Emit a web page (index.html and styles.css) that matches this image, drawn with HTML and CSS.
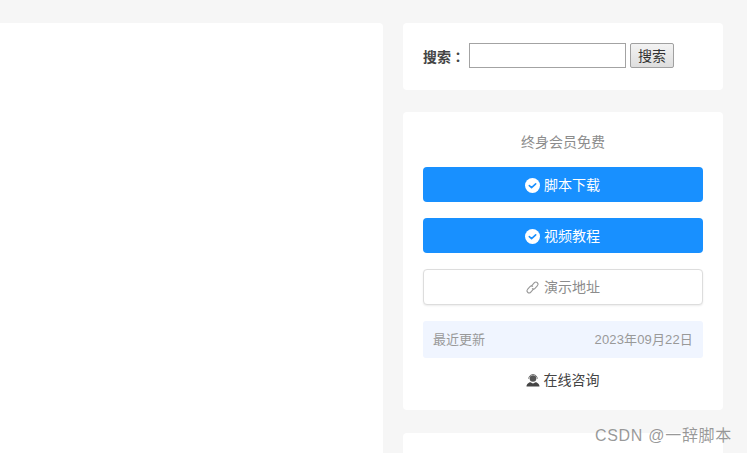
FILE: index.html
```html
<!DOCTYPE html>
<html lang="zh-CN">
<head>
<meta charset="utf-8">
<title>脚本下载</title>
<link rel="stylesheet" href="styles.css">
</head>
<body>
<div class="layout">
  <main class="content"></main>
  <aside class="sidebar">
    <section class="card search-card">
      <form class="search-form">
        <label class="search-label" lang="zh-Hant" for="q">搜索：</label>
        <input class="search-input" id="q" type="text">
        <button class="search-button" type="button">搜索</button>
      </form>
    </section>
    <section class="card info-card">
      <p class="free-note">终身会员免费</p>
      <a class="action primary">
        <svg class="icon" viewBox="0 0 16 16"><circle cx="8" cy="8" r="8" fill="#fff"/><path d="M4.600 8.100l2.400 2.200 4.400-4" fill="none" stroke="#1890ff" stroke-width="1.700" stroke-linecap="round" stroke-linejoin="round"/></svg>
        <span class="label">脚本下载</span>
      </a>
      <a class="action primary">
        <svg class="icon" viewBox="0 0 16 16"><circle cx="8" cy="8" r="8" fill="#fff"/><path d="M4.600 8.100l2.400 2.200 4.400-4" fill="none" stroke="#1890ff" stroke-width="1.700" stroke-linecap="round" stroke-linejoin="round"/></svg>
        <span class="label">视频教程</span>
      </a>
      <a class="action outline">
        <svg class="icon" viewBox="0 0 16 16" fill="none" stroke="#999" stroke-width="1.200"><path d="M6.800 6.500l3.200-3.600a2.300 2.300 0 0 1 3.300 3.200l-2.600 2.800a2.300 2.300 0 0 1-3.200.2"/><path d="M9.200 9.500l-3.200 3.600a2.300 2.300 0 0 1-3.300-3.200l2.600-2.800a2.300 2.300 0 0 1 3.200-.2"/></svg>
        <span class="label">演示地址</span>
      </a>
      <div class="update-row">
        <span class="label">最近更新</span>
        <span class="label update-date">2023年09月22日</span>
      </div>
      <a class="contact">
        <svg class="icon-small" viewBox="0 0 14 14"><circle cx="7" cy="5.500" r="3.300" fill="#555"/><path d="M2.700 5.800a4.300 4.300 0 0 1 8.600 0" fill="none" stroke="#777" stroke-width="1"/><path d="M.5 13.500c0-2.800 2.500-4 4-4.200L7 10.500l2.500-1.200c1.500.2 4 1.400 4 4.200z" fill="#444"/></svg>
        <span class="label">在线咨询</span>
      </a>
    </section>
    <section class="card bottom-card"></section>
  </aside>
</div>
<div class="watermark">CSDN @一辞脚本</div>
</body>
</html>
```
FILE: styles.css
```css
* { box-sizing: border-box; }

html, body {
  margin: 0;
  height: 453px;
  overflow: hidden;
}

body {
  position: relative;
  background: #f6f6f6;
  color: #333;
  font-family: "Liberation Sans", "Noto Sans CJK SC", sans-serif;
  font-size: 14px;
}

.layout {
  display: flex;
  gap: 20px;
  padding-top: 23px;
  height: 100%;
}

.content {
  width: 383px;
  background: #fff;
  border-radius: 0 4px 0 0;
}

.sidebar {
  width: 320px;
  display: flex;
  flex-direction: column;
  gap: 22px;
}

.card {
  flex: none;
  background: #fff;
  border-radius: 4px;
  padding: 20px;
}

.search-card { height: 67px; }

.search-form {
  display: flex;
  align-items: center;
  height: 25px;
}

.search-label {
  width: 46px;
  font-family: "Liberation Sans", "Noto Sans CJK TC", sans-serif;
  font-weight: 700;
  color: #444;
}

.search-input {
  width: 157px;
  height: 25px;
  margin: 0 4px 0 0;
  padding: 1px 2px;
  border: 1px solid #a3a3a3;
  background: #fff;
}

.search-button {
  width: 44px;
  height: 25px;
  padding: 0 0 2px;
  border: 1px solid #a0a0a0;
  border-radius: 2px;
  background: linear-gradient(#f3f3f3, #dedede);
  color: #333;
  font: inherit;
}

.info-card {
  height: 298px;
  padding-top: 20px;
  display: flex;
  flex-direction: column;
}

.free-note {
  margin: 0 0 15px;
  height: 20px;
  line-height: 20px;
  text-align: center;
  color: #8c8c8c;
}

.action {
  display: flex;
  align-items: center;
  justify-content: center;
  gap: 4px;
  height: 35px;
  margin-bottom: 16px;
  padding-right: 1px;
  border-radius: 4px;
}

.primary {
  background: #1890ff;
  color: #fff;
}

.outline {
  height: 36px;
  background: #fff;
  border: 1px solid #ddd;
  box-shadow: 0 1px 2px rgba(0, 0, 0, .08);
  color: #8c8c8c;
}

.icon {
  width: 15px;
  height: 15px;
  margin-top: 1px;
}

.label { margin-bottom: 2px; }

.update-row {
  display: flex;
  justify-content: space-between;
  align-items: center;
  height: 37px;
  padding: 0 10px;
  border-radius: 3px;
  background: #f0f5ff;
  color: #999;
  font-size: 13px;
}

.update-date { letter-spacing: .15px; }

.contact {
  display: flex;
  align-items: center;
  justify-content: center;
  gap: 4px;
  height: 20px;
  margin-top: 12px;
  padding-right: 1px;
  color: #444;
}

.icon-small {
  width: 14px;
  height: 14px;
}

.bottom-card {
  flex: 1;
  margin-top: 1px;
}

.watermark {
  position: absolute;
  right: 15px;
  bottom: 7px;
  color: rgba(120, 120, 120, .75);
  font-size: 16px;
  line-height: 20px;
  letter-spacing: .7px;
}
```
